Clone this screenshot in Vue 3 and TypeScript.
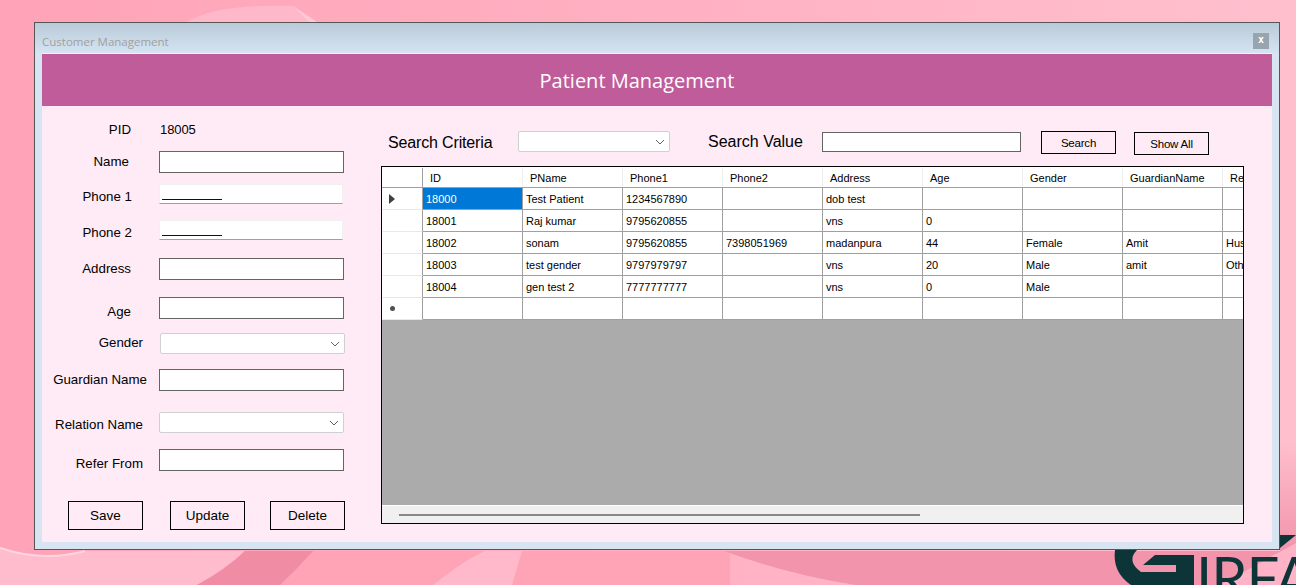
<script setup lang="ts">
type Field = {
  label: string
  kind: 'text' | 'mask' | 'combo' | 'value'
  top: number
  height: number
  labelEnd: number
  labelTop: number
  shift?: number
}

// rows are spaced unevenly on the original form, so each one carries its own gap
const fields: Field[] = [
  { label: 'PID', kind: 'value', top: 12, height: 22, labelEnd: 131, labelTop: 4 },
  { label: 'Name', kind: 'text', top: 11, height: 22, labelEnd: 129, labelTop: 3 },
  { label: 'Phone 1', kind: 'mask', top: 11, height: 20, labelEnd: 132, labelTop: 5 },
  { label: 'Phone 2', kind: 'mask', top: 16, height: 20, labelEnd: 132, labelTop: 5 },
  { label: 'Address', kind: 'text', top: 18, height: 22, labelEnd: 131, labelTop: 3 },
  { label: 'Age', kind: 'text', top: 17, height: 22, labelEnd: 131, labelTop: 7 },
  { label: 'Gender', kind: 'combo', top: 14, height: 21, labelEnd: 143, labelTop: 2, shift: 1 },
  { label: 'Guardian Name', kind: 'text', top: 15, height: 22, labelEnd: 147, labelTop: 3 },
  { label: 'Relation Name', kind: 'combo', top: 21, height: 21, labelEnd: 143, labelTop: 5 },
  { label: 'Refer From', kind: 'text', top: 16, height: 22, labelEnd: 143, labelTop: 7 },
]

const columns = ['ID', 'PName', 'Phone1', 'Phone2', 'Address', 'Age', 'Gender', 'GuardianName', 'RelationName']

const rows: string[][] = [
  ['18000', 'Test Patient', '1234567890', '', 'dob test', '', '', '', ''],
  ['18001', 'Raj kumar', '9795620855', '', 'vns', '0', '', '', ''],
  ['18002', 'sonam', '9795620855', '7398051969', 'madanpura', '44', 'Female', 'Amit', 'Husband'],
  ['18003', 'test gender', '9797979797', '', 'vns', '20', 'Male', 'amit', 'Other'],
  ['18004', 'gen test 2', '7777777777', '', 'vns', '0', 'Male', '', ''],
  ['', '', '', '', '', '', '', '', ''],
]
</script>

<template>
  <svg class="wallpaper" viewBox="0 0 1296 585" preserveAspectRatio="none">
    <defs>
      <linearGradient id="wall" x1="0" y1="0" x2="1" y2="0">
        <stop offset="0" stop-color="#ffa3b8" />
        <stop offset="0.5" stop-color="#ffb0c2" />
        <stop offset="1" stop-color="#ffc0ce" />
      </linearGradient>
      <linearGradient id="edge" x1="0" y1="0" x2="0" y2="1">
        <stop offset="0" stop-color="#f294ab" stop-opacity="0" />
        <stop offset="1" stop-color="#f294ab" />
      </linearGradient>
    </defs>
    <rect width="1296" height="585" fill="url(#wall)" />
    <path d="M186 22 C210 9 240 5 293 6 L317 22 Z" fill="#ffb8c9" />
    <path d="M293 6 L317 22 L309 22 Z" fill="#ffc8d4" />
    <rect x="0" y="551" width="730" height="34" fill="#ffa3b6" />
    <path d="M0 547 C30 558 60 558 85 551 L245 551 Q225 570 197 585 L0 585 Z" fill="#ffbccd" />
    <path d="M0 548 C30 558 60 558 85 551" fill="none" stroke="#ffd6e0" stroke-width="2" />
    <path d="M245 551 L313 551 Q298 568 280 585 L197 585 Q225 570 245 551 Z" fill="#f08ca3" />
    <path d="M485 551 C465 560 450 572 433 585 L512 585 L522 551 Z" fill="#ffb9cb" />
    <path d="M724 551 Q790 575 856 585 L1296 585 L1296 551 Z" fill="#f294ab" />
    <rect x="1280" y="440" width="16" height="111" fill="url(#edge)" />
    <path d="M1220 585 L1296 543 L1296 585 Z" fill="#ffb3c6" />
    <path d="M1280 535 L1296 535 L1280 548 Z" fill="#0d3436" />
    <path
      d="M1115 550 Q1112 572 1131 585 L1194 585 L1194 555 L1155 555 L1143 565 L1176 565 L1176 572 L1141 572 Q1126 561 1137 550 Z"
      fill="#0d3436"
    />
    <text class="logo" x="1196" y="599">IRFA</text>
  </svg>

  <div class="window">
    <div class="titlebar">
      <span class="caption">Customer Management</span>
      <span class="close">x</span>
    </div>
    <div class="frame">
      <header class="banner">Patient Management</header>
      <main class="body">
        <section class="form">
          <div
            v-for="f in fields"
            :key="f.label"
            class="field"
            :style="{ marginTop: f.top + 'px', height: f.height + 'px' }"
          >
            <label class="label" :style="{ width: f.labelEnd - 42 + 'px', top: f.labelTop + 'px' }">{{ f.label }}</label>
            <span v-if="f.kind === 'value'" class="pid">18005</span>
            <div v-else-if="f.kind === 'text'" class="input"></div>
            <div v-else-if="f.kind === 'mask'" class="mask"><i></i></div>
            <div v-else class="combo" :style="{ left: (f.shift ?? 0) + 'px' }">
              <svg width="10" height="6" viewBox="0 0 10 6"><path d="M1 1l4 4 4-4" fill="none" stroke="#606060" /></svg>
            </div>
          </div>
          <div class="actions">
            <button class="btn">Save</button>
            <button class="btn">Update</button>
            <button class="btn">Delete</button>
          </div>
        </section>

        <section class="results">
          <div class="search">
            <span class="search-label criteria-label">Search Criteria</span>
            <div class="combo criteria">
              <svg width="10" height="6" viewBox="0 0 10 6"><path d="M1 1l4 4 4-4" fill="none" stroke="#606060" /></svg>
            </div>
            <span class="search-label value-label">Search Value</span>
            <div class="input search-input"></div>
            <button class="btn small">Search</button>
            <button class="btn small showall">Show All</button>
          </div>

          <div class="grid">
            <div class="grid-head">
              <div class="corner"></div>
              <div v-for="c in columns" :key="c" class="th">{{ c }}</div>
            </div>
            <div v-for="(row, i) in rows" :key="i" class="tr">
              <div class="rowhead">
                <svg v-if="i === 0" width="6" height="10" viewBox="0 0 6 10"><path d="M0 0l6 5-6 5z" fill="#404040" /></svg>
                <span v-if="i === rows.length - 1" class="star"></span>
              </div>
              <div v-for="(cell, j) in row" :key="j" class="td" :class="{ selected: i === 0 && j === 0 }">{{ cell }}</div>
            </div>
            <div class="empty"></div>
            <div class="scrollbar"><div class="thumb"></div></div>
          </div>
        </section>
      </main>
    </div>
  </div>
</template>

<style>
body {
  overflow: hidden;
}
</style>

<style scoped>
.wallpaper {
  position: fixed;
  top: 0;
  left: 0;
  width: 1296px;
  height: 585px;
}
.logo {
  font-family: Lato, sans-serif;
  font-size: 58px;
  letter-spacing: -1px;
  fill: #0d3436;
}
.window {
  position: absolute;
  top: 22px;
  left: 34px;
  width: 1246px;
  height: 528px;
  box-sizing: border-box;
  border: 1px solid #555;
  background: #d7e4f2;
  font-family: 'Liberation Sans', sans-serif;
  color: #000;
}
.titlebar {
  height: 30px;
  display: flex;
  align-items: center;
  justify-content: space-between;
  padding: 6px 10px 0 7px;
  box-sizing: border-box;
  background: linear-gradient(#b9cad9, #d5e4f2);
}
.caption {
  font-family: 'Open Sans', sans-serif;
  font-size: 11.5px;
  color: #a0a0a0;
}
.close {
  width: 16px;
  height: 16px;
  background: #98a4ae;
  color: #fff;
  font: bold 10px/14px 'DejaVu Sans Mono', monospace;
  text-align: center;
}
.frame {
  margin: 0 7px;
  border-top: 1px solid #edf3f9;
}
.banner {
  height: 52px;
  background: #c05c9a;
  color: #fff;
  font-family: 'Open Sans', sans-serif;
  font-size: 20px;
  line-height: 54px;
  text-align: center;
  padding-right: 40px;
  box-sizing: border-box;
}
.body {
  height: 436px;
  background: #feebf6;
  display: flex;
}
.form {
  width: 339px;
  flex: none;
}
.field {
  position: relative;
  display: flex;
  align-items: center;
  padding-left: 117px;
  font-size: 13.3px;
}
.label {
  position: absolute;
  left: 0;
  text-align: right;
  white-space: nowrap;
}
.pid {
  padding-left: 1px;
  font-size: 13px;
  letter-spacing: -0.1px;
}
.input {
  width: 185px;
  height: 22px;
  box-sizing: border-box;
  border: 1px solid #646464;
  background: #fff;
}
.mask {
  position: relative;
  width: 184px;
  height: 20px;
  box-sizing: border-box;
  background: #fff;
  border: 1px solid #f0f0f0;
  border-bottom: 1px solid #a0a0a0;
}
.mask i {
  position: absolute;
  left: 2px;
  bottom: 3px;
  width: 60px;
  height: 1px;
  background: #111;
}
.combo {
  position: relative;
  width: 185px;
  height: 21px;
  box-sizing: border-box;
  border: 1px solid #d0d0d0;
  border-radius: 2px;
  background: #fff;
  display: flex;
  align-items: center;
  justify-content: flex-end;
  padding-right: 4px;
}
.actions {
  display: flex;
  margin: 30px 0 0 26px;
}
.btn {
  width: 75px;
  height: 29px;
  border: 1px solid #000;
  background: transparent;
  font: 13.5px 'Liberation Sans', sans-serif;
  color: #000;
  padding: 0;
}
.btn + .btn {
  margin-left: 27px;
}
.btn + .btn + .btn {
  margin-left: 25px;
}
.results {
  flex: 1;
  min-width: 0;
}
.search {
  height: 60px;
  display: flex;
  align-items: flex-start;
  padding-top: 25px;
  box-sizing: border-box;
}
.search-label {
  font-size: 16px;
  margin-left: 7px;
  line-height: 22px;
  width: 130px;
  flex: none;
}
.criteria-label {
  margin-top: 1px;
  letter-spacing: -0.15px;
}
.criteria {
  width: 152px;
  flex: none;
}
.value-label {
  margin-left: 38px;
  width: 114px;
}
.search-input {
  width: 199px;
  height: 20px;
  flex: none;
  margin-top: 1px;
}
.btn.small {
  width: 75px;
  height: 23px;
  margin-left: 20px;
  font-size: 11.5px;
  letter-spacing: -0.2px;
}
.btn.showall {
  margin-left: 18px;
  margin-top: 1px;
}
.grid {
  width: 863px;
  height: 358px;
  box-sizing: border-box;
  border: 1px solid #000;
  display: flex;
  flex-direction: column;
  overflow: hidden;
  font-size: 11px;
  background: #ababab;
}
.grid-head,
.tr {
  display: flex;
  flex: none;
  background: #fff;
}
.grid-head {
  height: 21px;
  padding-top: 1px;
  box-sizing: border-box;
  border-bottom: 1px solid #a0a0a0;
}
.corner,
.rowhead {
  width: 41px;
  flex: none;
  box-sizing: border-box;
  border-left: 1px solid #fff;
  border-right: 1px solid #a0a0a0;
}
.th {
  width: 100px;
  flex: none;
  box-sizing: border-box;
  padding: 4px 0 0 7px;
  border-right: 1px solid #eee;
  white-space: nowrap;
  overflow: hidden;
}
.tr {
  height: 22px;
}
.rowhead {
  display: flex;
  align-items: center;
  padding-left: 6px;
  border-bottom: 1px solid #e8e8e8;
}
.star {
  width: 5px;
  height: 5px;
  border-radius: 50%;
  background: #505050;
  margin-left: 1px;
}
.td {
  width: 100px;
  flex: none;
  box-sizing: border-box;
  padding: 5px 0 0 3px;
  border-right: 1px solid #a0a0a0;
  border-bottom: 1px solid #a0a0a0;
  white-space: nowrap;
  overflow: hidden;
}
.td.selected {
  background: #0078d7;
  color: #fff;
}
.empty {
  flex: 1;
}
.scrollbar {
  height: 18px;
  flex: none;
  box-sizing: border-box;
  border-top: 1px solid #fff;
  background: #f0f0f0;
  position: relative;
}
.thumb {
  position: absolute;
  left: 17px;
  top: 8px;
  width: 521px;
  height: 2px;
  background: #888;
}
</style>
